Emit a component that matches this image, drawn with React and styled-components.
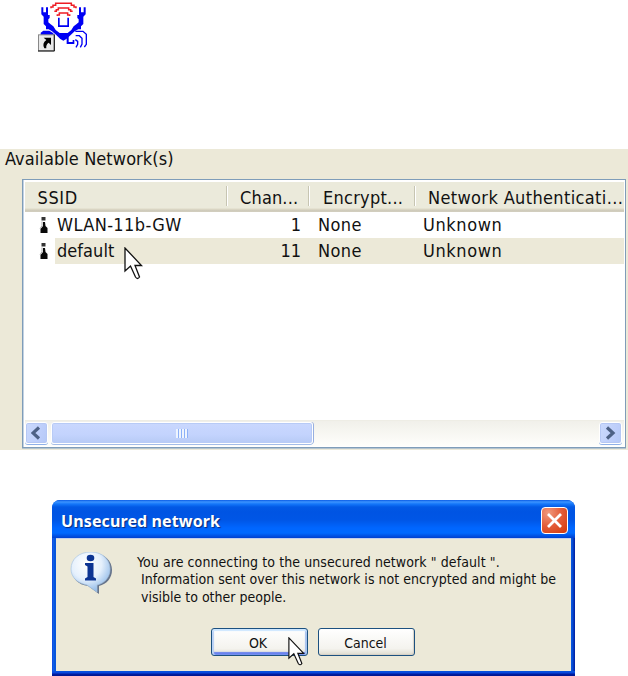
import React from 'react'
import styled, { createGlobalStyle } from 'styled-components'

const GlobalStyle = createGlobalStyle`
  body {
    margin: 0;
    background: #fff;
    color: #111;
    font-family: 'DejaVu Sans Condensed', 'DejaVu Sans', 'Noto Sans', sans-serif;
    font-stretch: condensed;
  }
`

const Page = styled.main`
  width: 628px;
  height: 676px;
  overflow: hidden;
`

const Desktop = styled.header`
  height: 149px;
  padding-left: 38px;
  box-sizing: border-box;
  svg {
    display: block;
  }
`

const Label = styled.span`
  white-space: pre;
  letter-spacing: ${props => props.$spacing || 0}px;
`

const Panel = styled.section`
  height: 301px;
  padding: 0 2px 2px 22px;
  box-sizing: border-box;
  background: #ece9d8;
  font-size: 18px;
`

const PanelTitle = styled.div`
  height: 30px;
  margin-left: -17px;
  line-height: 20px;
`

const ListBox = styled.div`
  height: 269px;
  padding: 2px 1px 1px 2px;
  box-sizing: border-box;
  border: 1px solid #7f9db9;
  box-shadow: inset 1px 0 #c3d2e2, 0 1px #b5c4cf;
  background: #fff;
  display: flex;
  flex-direction: column;
`

const HeaderRow = styled.div`
  display: grid;
  grid-template-columns: 201px 82px 106px 1fr;
  height: 30px;
  box-sizing: border-box;
  padding-top: 4px;
  background: linear-gradient(#ebeadb 0 26px, #dedac7 27px, #cbc7b8 29px, #d8d4c4);
`

const HeaderCell = styled.div`
  height: 20px;
  line-height: 23px;
  padding-left: ${props => props.$pad}px;
  border-left: ${props => (props.$first ? 'none' : '1px solid #c7c5b2')};
  box-shadow: ${props => (props.$first ? 'none' : 'inset 1px 0 #fff')};
  white-space: nowrap;
`

const Row = styled.div`
  display: grid;
  grid-template-columns: 30px 246px 107px 1fr;
  height: 25.5px;
  line-height: 26px;
`

const Cell = styled.div`
  background: ${props => (props.$selected ? '#ece9d8' : '#fff')};
  padding-left: ${props => props.$pad || 0}px;
  white-space: nowrap;
`

const SsidCell = styled(Cell)`
  display: flex;
  justify-content: space-between;
`

const IconCell = styled.div`
  padding: 4px 0 0 14px;
  svg {
    display: block;
  }
`

const Pointer = styled.svg`
  position: absolute;
  left: ${props => props.$left}px;
  top: ${props => props.$top}px;
`

const PointerAnchor = styled.span`
  position: relative;
`

const ScrollBar = styled.div`
  margin-top: auto;
  height: 26px;
  box-sizing: border-box;
  padding: 1px 2px 0 0;
  display: flex;
  border-top: 1px solid #eeede5;
  background: linear-gradient(#f1f0ea, #fefefb);
`

const scrollFace = `
  height: 22px;
  box-sizing: border-box;
  border: 1px solid #fff;
  border-radius: 3px;
  background: linear-gradient(110deg, #cbdafd, #bccdfa 70%, #b4c8f6);
  display: flex;
  align-items: center;
  justify-content: center;
`

const ScrollButton = styled.div`
  ${scrollFace}
  width: 23px;
  box-shadow: 0 1px #8fb0e8, inset 0 0 0 1px #b5c7f4;
`

const Thumb = styled.div`
  ${scrollFace}
  width: 262px;
  margin-left: 3px;
  margin-right: auto;
  background: linear-gradient(#cad8fe, #c3d3fd 60%, #b7caf5);
  box-shadow: 0 1px #a3bce8, 1px 0 #97afe0, inset 0 0 0 1px #b8cbf6;
`

const Grip = styled.div`
  width: 12px;
  height: 9px;
  background: repeating-linear-gradient(90deg, #eef4fe 0 2px, #8cb0f8 2px 3px);
`

const Dialog = styled.section`
  width: 523px;
  height: 176px;
  margin: 50px 0 0 52px;
  box-sizing: border-box;
  border-radius: 8px 8px 0 0;
  overflow: hidden;
  background: linear-gradient(90deg, #0831d9 0, #166aee 1px, #0855dd 2px, #0855dd 520px, #001ea0 523px);
  display: flex;
  flex-direction: column;
`

const TitleBar = styled.div`
  height: 38px;
  box-sizing: border-box;
  padding: 3px 7px 0 9px;
  display: flex;
  align-items: center;
  justify-content: space-between;
  color: #fff;
  font: bold 16px 'Noto Sans', sans-serif;
  text-shadow: 1px 1px 1px #0a2a7c;
  background: linear-gradient(
    #0a5be5 0, #3c94ff 2px, #1477fa 4px, #0259e5 7px, #0054e3 12px,
    #0056e6 20px, #0066ff 28px, #0069ff 33px, #0058ec 35px, #0040cf 38px
  );
`

const CloseButton = styled.div`
  width: 27px;
  height: 27px;
  box-sizing: border-box;
  border: 1px solid #fff;
  border-radius: 4px;
  background: radial-gradient(circle at 25% 20%, #f0997d, #e35b37 50%, #d2380a);
  display: flex;
  align-items: center;
  justify-content: center;
`

const DialogBody = styled.div`
  height: 133px;
  margin: 0 4px;
  box-sizing: border-box;
  background: #ece9d8;
  border-top: 1px solid #c5cfea;
  display: flex;
  flex-direction: column;
`

const DialogFoot = styled.div`
  flex: 1;
  background: linear-gradient(#0855dd, #0845dd 40%, #001ea0 60%, #001590);
`

const Message = styled.div`
  display: flex;
  padding: 13px 0 0 14px;
  height: 89px;
  box-sizing: border-box;
`

const MessageText = styled.div`
  padding: 2px 0 0 24px;
  font-size: 14px;
  line-height: 17.4px;
  display: flex;
  flex-direction: column;
`

const MessageLine = styled(Label)`
  margin-left: ${props => props.$indent || 0}px;
`

const Buttons = styled.div`
  display: flex;
  gap: 10px;
  padding-left: 155px;
`

const Button = styled.button`
  position: relative;
  width: 97px;
  height: 28px;
  padding: ${props => (props.$active ? '1px 3px 0 0' : '1px 2px 0 0')};
  border: 1px solid #1c5180;
  border-radius: 3px;
  background: linear-gradient(#fff, #f4f3ee 75%, #dfdccf);
  box-shadow: ${props => (props.$active
    ? 'inset 0 2px 1px #cee7ff, inset 2px 0 1px #b9d0f6, inset -2px 0 1px #a5c0ee, inset 0 -3px 1px #6982ee'
    : 'inset -1px -1px 1px #d6d0c5')};
  font: inherit;
  font-family: 'DejaVu Sans Condensed', 'DejaVu Sans', sans-serif;
  font-stretch: condensed;
  font-size: 14px;
  color: #111;
`

const Cursor = ({ left, top, width, height }) => (
  <Pointer $left={left} $top={top} width={width} height={height} viewBox='0 0 19 34' preserveAspectRatio='none'>
    <path
      d='M1 1V24L6.500 19L11.500 30Q13.500 33 15.500 30L11 18.500H17.500Z'
      fill='#fff' stroke='#111' strokeWidth='1.3'
    />
  </Pointer>
)

const ShortcutIcon = () => (
  <svg width='50' height='53' viewBox='6 0 150 159' fill='none'>
    <g stroke='#ee1c24' strokeWidth='4.500'>
      <path d='M45 25V21H51V16H59V10H106V16H114V21H120V25' />
      <path d='M55 34H61V29H67V24H98V29H104V34H110' />
      <path d='M64 48V45H70V39H95V45H101V48' />
    </g>
    <g fill='#0000f4'>
      <path d='M16 22H22V37H30V22H36V45H41V54L37 58V67L44 73L52 79L59 90L71 99H95L106 90L113 79L121 73L128 67V58L124 54V45H129V22H135V37H143V22H149V43L142 50V72L135 79V88H127L116 94L105 104L91 117L82 122L73 117L60 104L48 94L38 88H30V79L23 72V50L16 43Z' />
      <path d='M66 53H71V76H94V53H99V81H66Z' />
      <path d='M14 106V98L22 92H40L50 98L57 106Z' />
      <path d='M92 103H98V126H110V120H115V132H92Z' />
    </g>
    <g stroke='#0000f4' strokeWidth='4'>
      <path d='M118 94H141L151 103V133L145 141' />
      <path d='M119 107H130L138 115V132L133 142' />
      <path d='M118 119L125 124V133L120 142' />
    </g>
    <path d='M42 53L55 47L61 56V72H56L48 66Z M123 53L110 47L104 56V72H109L117 66Z' fill='#fff' />
    <rect x='7.500' y='104.500' width='47' height='48' fill='#e9e9e9' stroke='#888' strokeWidth='3' />
    <path d='M55 104V153H6' stroke='#111' strokeWidth='3' />
    <path d='M23 113H45V135L38 128Q29 134 31 145H25Q17 130 31 120Z' fill='#000' />
  </svg>
)

const AntennaIcon = () => (
  <svg width='10' height='18' viewBox='0 0 10 18'>
    <path d='M2.500 1H6.500V4.500H2.500Z' fill='#333' />
    <path d='M4 6H6L6.500 10L8.500 12V17H1.500V13L4 10Z' fill='#090909' />
    <path d='M3 5.500V9.500L1 13' stroke='#aaa' fill='none' />
  </svg>
)

const InfoIcon = () => (
  <svg width='43' height='44' viewBox='0 0 43 44'>
    <defs>
      <radialGradient id='bubble' cx='40%' cy='30%' r='70%'>
        <stop offset='0' stopColor='#fff' />
        <stop offset='.55' stopColor='#e5f0fc' />
        <stop offset='1' stopColor='#94bce9' />
      </radialGradient>
    </defs>
    <path d='M22 1C35 1 42 9 42 18C42 26 37 32 29 34V42L18 34C8 33 2 26 2 18C2 8 10 1 22 1Z' fill='#66748b' />
    <path d='M21 0C33 0 40 8 40 17C40 25 35 31 27 33V40L17 33C7 31 1 25 1 17C1 7 9 0 21 0Z' fill='url(#bubble)' stroke='#a9c5e4' strokeWidth='.7' />
    <ellipse cx='20.500' cy='6' rx='3.800' ry='3.200' fill='#0c3493' />
    <path d='M15 11H23.500V25L26 26.500V28.500H15V26.500L17.500 25V14.500L15 13Z' fill='#0c3493' />
  </svg>
)

const Chevron = ({ right }) => (
  <svg width='11' height='14' viewBox='0 0 11 14'>
    <path d={right ? 'M2 1.500L8 7L2 12.500' : 'M8 1.500L2 7L8 12.500'} fill='none' stroke='#4d6185' strokeWidth='3.200' />
  </svg>
)

const networks = [
  { ssid: 'WLAN-11b-GW', channel: '1', spacing: 0.38 },
  { ssid: 'default', channel: '11', spacing: 0.05, selected: true }
]

const NetworkRow = ({ network }) => {
  const { ssid, channel, spacing, selected } = network
  return (
    <Row>
      <IconCell><AntennaIcon /></IconCell>
      <SsidCell $selected={selected} $pad={2}>
        <PointerAnchor>
          <Label $spacing={spacing}>{ssid}</Label>
          {selected && <Cursor left={67} top={9} width={19} height={34} />}
        </PointerAnchor>
        <Label>{channel}</Label>
      </SsidCell>
      <Cell $selected={selected} $pad={17}><Label $spacing={0.4}>None</Label></Cell>
      <Cell $selected={selected} $pad={15}><Label $spacing={0.6}>Unknown</Label></Cell>
    </Row>
  )
}

const App = () => {
  return (
    <Page>
      <GlobalStyle />
      <Desktop><ShortcutIcon /></Desktop>
      <Panel>
        <PanelTitle><Label $spacing={0.08}>Available Network(s)</Label></PanelTitle>
        <ListBox>
          <HeaderRow>
            <HeaderCell $first $pad={12.5}><Label $spacing={0.6}>SSID</Label></HeaderCell>
            <HeaderCell $pad={13}><Label $spacing={0.15}>Chan...</Label></HeaderCell>
            <HeaderCell $pad={14}><Label $spacing={0.25}>Encrypt...</Label></HeaderCell>
            <HeaderCell $pad={13}><Label $spacing={0.36}>Network Authenticati...</Label></HeaderCell>
          </HeaderRow>
          {networks.map(network => <NetworkRow key={network.ssid} network={network} />)}
          <ScrollBar>
            <ScrollButton><Chevron /></ScrollButton>
            <Thumb><Grip /></Thumb>
            <ScrollButton><Chevron right /></ScrollButton>
          </ScrollBar>
        </ListBox>
      </Panel>
      <Dialog>
        <TitleBar>
          <Label $spacing={0.12}>Unsecured network</Label>
          <CloseButton>
            <svg width='17' height='17' viewBox='0 0 17 17'>
              <path d='M2 2L15 15M15 2L2 15' stroke='#fff' strokeWidth='2.800' />
            </svg>
          </CloseButton>
        </TitleBar>
        <DialogBody>
          <Message>
            <InfoIcon />
            <MessageText>
              <MessageLine $spacing={0.09}>You are connecting to the unsecured network " default ".</MessageLine>
              <MessageLine $indent={4} $spacing={0.03}>Information sent over this network is not encrypted and might be</MessageLine>
              <MessageLine $indent={4}>visible to other people.</MessageLine>
            </MessageText>
          </Message>
          <Buttons>
            <Button $active>
              <Label>OK</Label>
              <Cursor left={76} top={8} width={17} height={30} />
            </Button>
            <Button><Label>Cancel</Label></Button>
          </Buttons>
        </DialogBody>
        <DialogFoot />
      </Dialog>
    </Page>
  )
}

export default App
